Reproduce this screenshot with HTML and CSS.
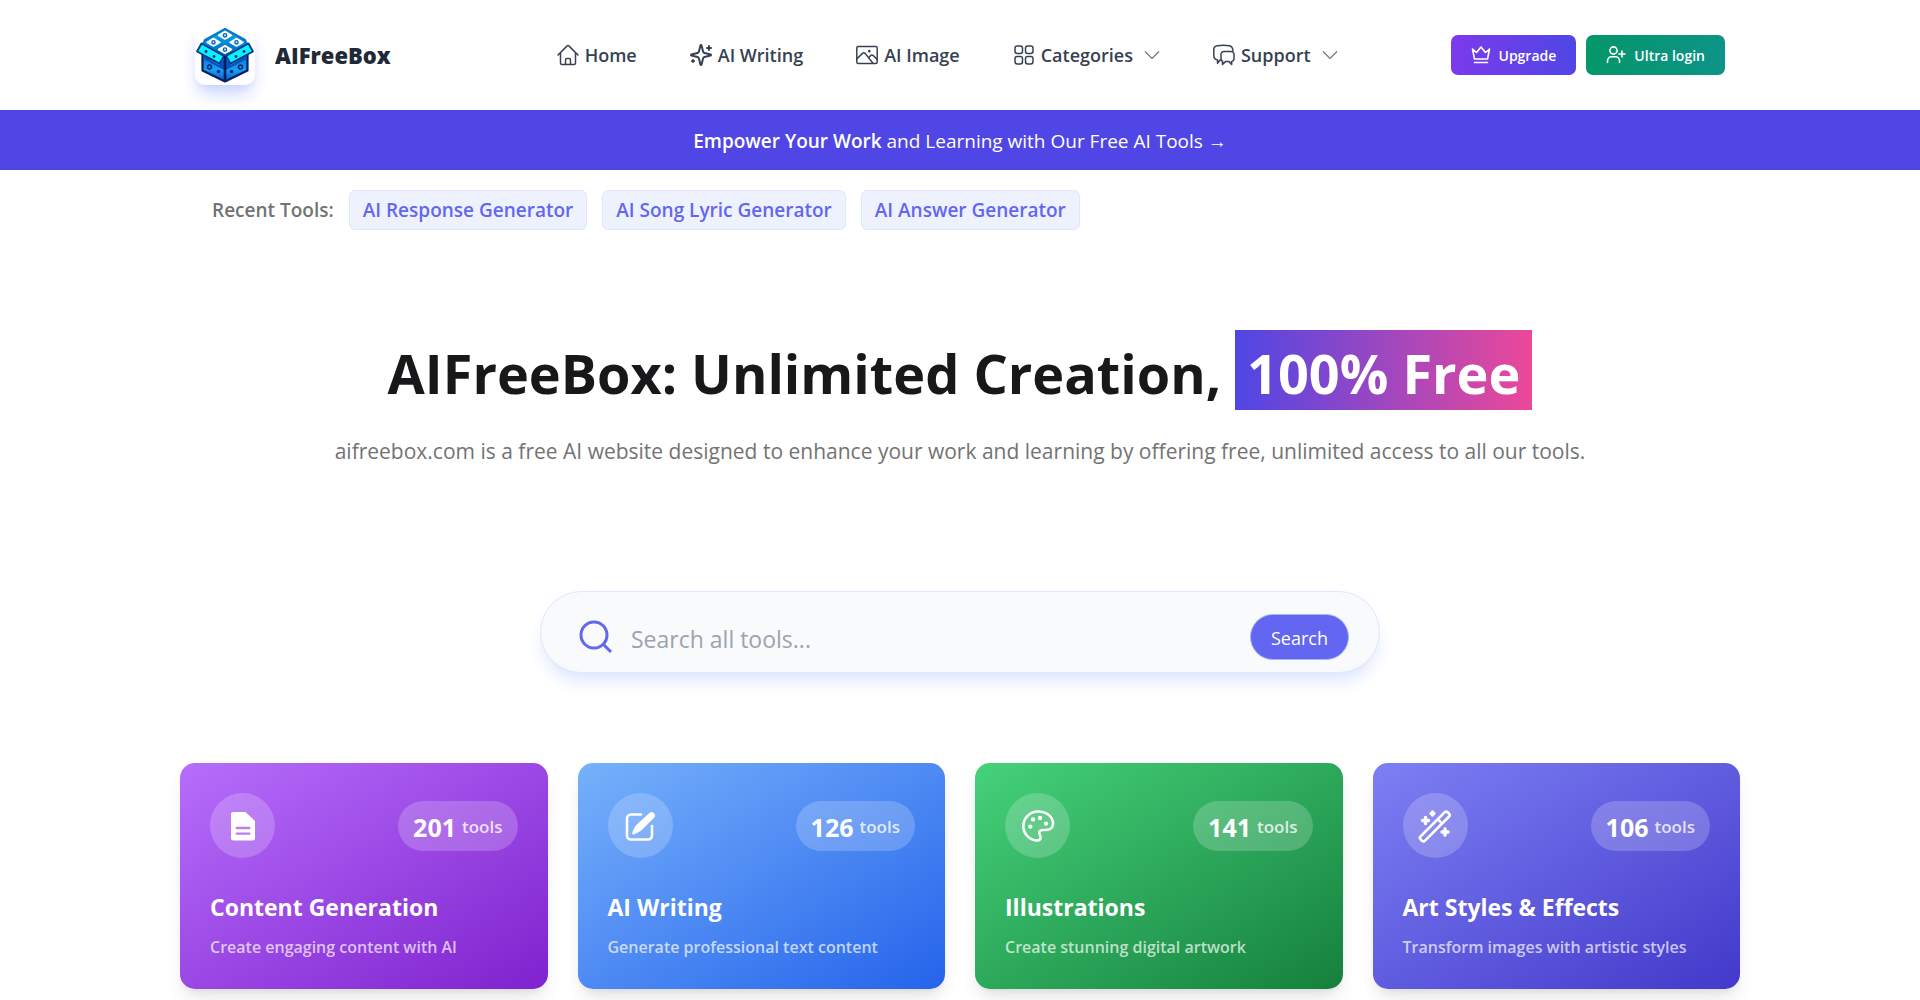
FILE: index.html
```html
<!DOCTYPE html>
<html lang="en">
<head>
<meta charset="utf-8">
<meta name="viewport" content="width=device-width, initial-scale=1">
<title>AIFreeBox</title>
<link rel="stylesheet" href="styles.css">
</head>
<body>
<header class="header container">
  <a class="brand" href="#">
    <span class="brand-logo">
      <svg viewBox="0 0 60 60" width="60" height="60" aria-hidden="true">
        <defs>
          <linearGradient id="lid" x1="0" y1="0" x2="0" y2="1"><stop offset="0" stop-color="#05b8ee"/><stop offset="1" stop-color="#0655b8"/></linearGradient>
          <linearGradient id="side" x1="0" y1="0" x2="0" y2="1"><stop offset="0" stop-color="#0568d0"/><stop offset="0.6" stop-color="#18a0f6"/><stop offset="1" stop-color="#0b55c0"/></linearGradient>
          <linearGradient id="tile" x1="0" y1="0" x2="0" y2="1"><stop offset="0.4" stop-color="#fff"/><stop offset="1" stop-color="#3beeff"/></linearGradient>
        </defs>
        <path d="M7.500 27v18.500L30 56.500l22.500-11V27L30 33z" fill="url(#side)" stroke="#041e63" stroke-width="2.200" stroke-linejoin="round"/>
        <path d="M8 30 24 40l5-6v11L8 34zM52 30 36 40l-5-6v11l21-11z" fill="#0553b8"/>
        <path d="M30 4 10 15 5 25l25 8 25-8-5-10z" fill="url(#lid)" stroke="#0578cc" stroke-width="2" stroke-linejoin="round"/>
        <g fill="url(#tile)" stroke="#fff" stroke-width="1.500" stroke-linejoin="round">
          <path d="m30 6.500 6.500 3.800-6.500 3.800-6.500-3.800z"/><path d="m18.500 13.500 6.500 3.800-6.500 3.800-6.500-3.800z"/><path d="m41.500 13.500 6.500 3.800-6.500 3.800-6.500-3.800z"/><path d="m30 20.700 6.500 3.800-6.500 3.800-6.500-3.800z"/>
        </g>
        <path d="M6.500 18.500 29 31 24.500 38.500 2 26.500zM53.500 18.500 31 31l4.500 7.500L58 26.500z" fill="#08f3ff" stroke="#05388f" stroke-width="1.800" stroke-linejoin="round"/>
        <path d="M30 31v25.500" stroke="#041e63" stroke-width="2.600"/>
        <g fill="none" stroke="#0758b5" stroke-width="1.300"><circle cx="30" cy="10.300" r="1.600"/><circle cx="18.500" cy="17.300" r="1.600"/><circle cx="41.500" cy="17.300" r="1.600"/><circle cx="30" cy="24.500" r="1.600"/></g>
        <g fill="none" stroke="#042873" stroke-width="1.600"><circle cx="14.500" cy="42" r="2"/><circle cx="45.500" cy="42" r="2"/></g>
        <g fill="#042873"><circle cx="11" cy="26.500" r="1.400"/><circle cx="19" cy="31.500" r="1.400"/><circle cx="41" cy="31.500" r="1.400"/><circle cx="49" cy="26.500" r="1.400"/><circle cx="23.500" cy="46.500" r="1.800"/><circle cx="36.500" cy="46.500" r="1.800"/></g>
      </svg>
    </span>
    <span class="brand-name">AIFreeBox</span>
  </a>
  <nav class="nav" aria-label="Main">
    <a class="nav-link" href="#">
      <svg class="icon" viewBox="0 0 24 24" aria-hidden="true"><path d="m2 12 9.200-9.100a1.200 1.200 0 0 1 1.600 0L22 12M4.500 9.800V20a1.500 1.500 0 0 0 1.500 1.500h12a1.500 1.500 0 0 0 1.500-1.500V9.800M9.500 21.500V17a1.500 1.500 0 0 1 1.500-1.500h2a1.500 1.500 0 0 1 1.500 1.500v4.500"/></svg>
      Home</a>
    <a class="nav-link" href="#">
      <svg class="icon icon-bold" viewBox="0 0 24 24" aria-hidden="true"><path d="M9.937 15.500A2 2 0 0 0 8.500 14.063l-6.135-1.582a.5.5 0 0 1 0-.962L8.500 9.936A2 2 0 0 0 9.937 8.500l1.582-6.135a.5.5 0 0 1 .963 0L14.063 8.500A2 2 0 0 0 15.500 9.937l6.135 1.581a.5.5 0 0 1 0 .964L15.500 14.063a2 2 0 0 0-1.437 1.437l-1.582 6.135a.5.5 0 0 1-.963 0zM20 3v4M22 5h-4M4 17v2M5 18H3"/></svg>
      AI Writing</a>
    <a class="nav-link" href="#">
      <svg class="icon" viewBox="0 0 24 24" aria-hidden="true"><rect x="1.800" y="3.500" width="20.400" height="17" rx="1.500"/><path d="m2 15.800 5.200-5.200a2.200 2.200 0 0 1 3.100 0l7.700 9.700M14 14.200l1.400-1.400a2.200 2.200 0 0 1 3.100 0l3.500 3.500"/><circle cx="14.300" cy="8.200" r=".6"/></svg>
      AI Image</a>
    <button class="nav-link" type="button">
      <svg class="icon" viewBox="0 0 24 24" aria-hidden="true"><rect x="3" y="3" width="7.500" height="7.500" rx="2.200"/><rect x="13.500" y="3" width="7.500" height="7.500" rx="2.200"/><rect x="3" y="13.500" width="7.500" height="7.500" rx="2.200"/><rect x="13.500" y="13.500" width="7.500" height="7.500" rx="2.200"/></svg>
      Categories
      <svg class="chevron" viewBox="0 0 16 16" aria-hidden="true"><path d="m1 4.500 7 7 7-7"/></svg>
    </button>
    <button class="nav-link" type="button">
      <svg class="icon" viewBox="0 0 24 24" aria-hidden="true"><path d="M8.500 17H8l-2.500 3.300V16.900C3 16.500 1.800 15 1.800 12.800V6.600C1.800 4.300 3.100 3 5.400 2.700c4-.5 8-.5 12 0 2 .3 3.300 1.700 3.500 4.800M12 8.500h7.200a2.800 2.800 0 0 1 2.800 2.800v4.300a2.800 2.800 0 0 1-2.300 2.800v3l-3-3h-3l-3.200 3v-3.100a2.500 2.500 0 0 1-1.500-2.500v-4.500a2.800 2.800 0 0 1 3-2.800z"/></svg>
      Support
      <svg class="chevron" viewBox="0 0 16 16" aria-hidden="true"><path d="m1 4.500 7 7 7-7"/></svg>
    </button>
  </nav>
  <div class="actions">
    <button class="action action-upgrade" type="button">
      <svg class="action-icon" viewBox="0 0 20 20" aria-hidden="true"><path d="m1.500 4 4 3.500L10 2l4.500 5.500 4-3.500-2 10h-13zM3.500 17.500h13"/></svg>
      Upgrade</button>
    <button class="action action-login" type="button">
      <svg class="action-icon" viewBox="0 0 20 20" aria-hidden="true"><circle cx="7.500" cy="5.500" r="3.600"/><path d="M1.500 17.500v-1.700a4 4 0 0 1 4-4h4a4 4 0 0 1 4 4v1.700M16 6v6M13 9h6"/></svg>
      Ultra login</button>
  </div>
</header>

<a class="banner" href="#"><span><strong>Empower Your Work</strong> and Learning with Our Free AI Tools →</span></a>

<main>
  <section class="recent container" aria-label="Recent tools">
    <span class="recent-label">Recent Tools:</span>
    <a class="chip" href="#">AI Response Generator</a>
    <a class="chip" href="#">AI Song Lyric Generator</a>
    <a class="chip" href="#">AI Answer Generator</a>
  </section>

  <section class="hero container">
    <h1 class="hero-title">AIFreeBox: Unlimited Creation, <span class="hero-mark">100% Free</span></h1>
    <p class="hero-text">aifreebox.com is a free AI website designed to enhance your work and learning by offering free, unlimited access to all our tools.</p>
  </section>

  <form class="search" role="search">
    <label class="search-label" for="tool-search" aria-label="Search all tools">
      <svg class="search-icon" viewBox="0 0 34 34" aria-hidden="true"><circle cx="15" cy="15" r="13"/><path d="m24.500 24.500 7.500 7.500"/></svg>
    </label>
    <input class="search-input" id="tool-search" type="text" placeholder="Search all tools...">
    <button class="search-button" type="submit">Search</button>
  </form>

  <section class="cards container" aria-label="Tool categories">
    <a class="card card-purple" href="#">
      <span class="card-top">
        <span class="card-icon"><svg viewBox="0 0 32 32" aria-hidden="true"><path fill="#fff" fill-rule="evenodd" d="M6 2h12.500L28 11v17a2.500 2.500 0 0 1-2.500 2.500h-19A2.500 2.500 0 0 1 4 28V4a2 2 0 0 1 2-2zm3.700 14.800a1.200 1.200 0 0 0 0 2.400h12.600a1.200 1.200 0 0 0 0-2.400zm0 5.600a1.200 1.200 0 0 0 0 2.400h12.600a1.200 1.200 0 0 0 0-2.400z"/></svg></span>
        <span class="count"><strong>201</strong> tools</span>
      </span>
      <span class="card-title">Content Generation</span>
      <span class="card-text">Create engaging content with AI</span>
    </a>
    <a class="card card-blue" href="#">
      <span class="card-top">
        <span class="card-icon"><svg viewBox="0 0 32 32" aria-hidden="true"><path class="stroke" d="M17 4.500H7A4 4 0 0 0 3 8.500v17a4 4 0 0 0 4 4h17a4 4 0 0 0 4-4V16"/><path fill="#fff" d="M25.200 3.200a3.300 3.300 0 0 1 4.700 4.700L18.500 19.300c-2.600 2.600-5.500 4-9.300 5.100-.7.200-1.200-.4-1-1.100 1.100-3.800 2.600-6.700 5.100-9.200z"/></svg></span>
        <span class="count"><strong>126</strong> tools</span>
      </span>
      <span class="card-title">AI Writing</span>
      <span class="card-text">Generate professional text content</span>
    </a>
    <a class="card card-green" href="#">
      <span class="card-top">
        <span class="card-icon"><svg viewBox="0 0 32 32" aria-hidden="true"><path class="stroke" d="M16 1.500C7.500 1.500 1.300 8.200 1.300 16S7.500 30.500 15.500 30.500c2.200 0 3.300-1.700 3-3.500-.3-2-1.800-3-1.200-5 .5-1.500 1.900-2 3.700-2h3c4 0 7-2.200 7-6.500C31 6.200 24 1.500 16 1.500z"/><circle cx="8.300" cy="16.600" r="2.200" fill="#fff"/><circle cx="11" cy="9.400" r="2.200" fill="#fff"/><circle cx="18" cy="8" r="2.200" fill="#fff"/><circle cx="24" cy="13.600" r="2.200" fill="#fff"/></svg></span>
        <span class="count"><strong>141</strong> tools</span>
      </span>
      <span class="card-title">Illustrations</span>
      <span class="card-text">Create stunning digital artwork</span>
    </a>
    <a class="card card-indigo" href="#">
      <span class="card-top">
        <span class="card-icon"><svg viewBox="0 0 32 32" aria-hidden="true"><path class="stroke" d="M1.500 26.500 25.800 2.200a2 2 0 0 1 2.800 0l1.500 1.500a2 2 0 0 1 0 2.800L5.800 30.800a2 2 0 0 1-2.800 0l-1.500-1.500a2 2 0 0 1 0-2.800zM18.800 9.200l4.300 4.300"/><path class="stroke stroke-bold" d="M6.500 7.500v6M3.500 10.500h6M13.500 2v3M12 3.500h3M26 19v6M23 22h6"/></svg></span>
        <span class="count"><strong>106</strong> tools</span>
      </span>
      <span class="card-title">Art Styles &amp; Effects</span>
      <span class="card-text">Transform images with artistic styles</span>
    </a>
  </section>
</main>
</body>
</html>
```
FILE: styles.css
```css
* {
  box-sizing: border-box;
}

body {
  margin: 0;
  background: #fff;
  color: #18181b;
  font-family: "Open Sans", "Noto Sans", sans-serif;
  font-size: 18px;
}

a {
  color: inherit;
  text-decoration: none;
}

button,
input {
  font-family: inherit;
}

button {
  border: 0;
  cursor: pointer;
}

svg {
  display: block;
  flex: none;
}

.container {
  width: 100%;
  max-width: 1560px;
  margin: 0 auto;
}

/* Header */
.header {
  display: flex;
  align-items: center;
  justify-content: space-between;
  min-height: 110px;
  padding: 0 15px;
}

.brand {
  display: flex;
  align-items: center;
  gap: 20px;
}

.brand-logo {
  border-radius: 10px;
  background: #fff;
  box-shadow: 0 12px 18px -4px #c7d2fe, 0 5px 8px -5px #c7d2fe;
}

.brand-name {
  color: #1f2937;
  font-size: 22px;
  font-weight: 800;
}

.nav {
  display: flex;
  align-items: center;
  gap: 52px;
  margin-left: 52px;
}

.nav-link {
  display: flex;
  align-items: center;
  gap: 5px;
  padding: 0;
  background: none;
  color: #374151;
  font-size: 18px;
  font-weight: 600;
}

.icon {
  width: 24px;
  height: 24px;
  fill: none;
  stroke: #374151;
  stroke-width: 1.5;
  stroke-linecap: round;
  stroke-linejoin: round;
}

.icon-bold {
  stroke-width: 2;
}

.chevron {
  width: 16px;
  height: 16px;
  margin-left: 6px;
  fill: none;
  stroke: #6b7280;
  stroke-width: 1.2;
}

.actions {
  display: flex;
  gap: 10px;
}

.action {
  display: flex;
  align-items: center;
  gap: 8px;
  height: 40px;
  padding: 0 20px;
  border-radius: 7px;
  color: #fff;
  font-size: 14px;
  font-weight: 600;
}

.action-upgrade {
  background: linear-gradient(to right, #7c3aed, #4f46e5);
}

.action-login {
  background: linear-gradient(to right, #059669, #0d9488);
}

.action-icon {
  width: 20px;
  height: 20px;
  fill: none;
  stroke: #fff;
  stroke-width: 1.6;
  stroke-linecap: round;
  stroke-linejoin: round;
}

/* Banner */
.banner {
  display: flex;
  align-items: center;
  justify-content: center;
  min-height: 60px;
  padding-top: 2px;
  background: #4f46e5;
  color: #fff;
  font-size: 19px;
}

.banner strong {
  font-weight: 600;
}

/* Recent tools */
.recent {
  display: flex;
  flex-wrap: wrap;
  align-items: center;
  gap: 15px;
  padding: 20px 32px;
}

.recent-label {
  color: #737373;
  font-size: 19px;
  font-weight: 600;
}

.chip {
  padding: 0 13px;
  border: 1px solid #e0e7ff;
  border-radius: 6px;
  background: #eef2ff;
  color: #6366f1;
  font-size: 19px;
  font-weight: 600;
  line-height: 38px;
}

/* Hero */
.hero {
  padding: 80px 0 121px;
  text-align: center;
}

.hero-title {
  margin: 0;
  font-size: 54px;
  font-weight: 700;
  line-height: 74px;
}

.hero-mark {
  display: inline-block;
  padding: 6px 12px 0;
  background: linear-gradient(to right, #4f46e5, #ec4899);
  color: #fff;
}

.hero-text {
  margin: 22px 0 0;
  color: #737373;
  font-size: 21px;
  line-height: 38px;
}

/* Search */
.search {
  display: flex;
  align-items: center;
  width: 100%;
  max-width: 840px;
  min-height: 82px;
  margin: 0 auto 90px;
  padding: 10px 30px 0 38px;
  border: 1px solid #e0e7ff;
  border-radius: 41px;
  background: #f9fafb;
  box-shadow: 0 12px 18px -4px #e0e7ff, 0 5px 8px -5px #e0e7ff;
}

.search-icon {
  width: 34px;
  height: 34px;
  fill: none;
  stroke: #6366f1;
  stroke-width: 3;
}

.search-input {
  flex: 1;
  min-width: 0;
  padding: 4px 0 0 18px;
  border: 0;
  outline: 0;
  background: transparent;
  color: #374151;
  font-size: 23px;
}

.search-input::placeholder {
  color: #9ca3af;
}

.search-button {
  height: 46px;
  padding: 2px 20px 0;
  border: 1px solid #a5b4fc;
  border-radius: 23px;
  background: #6366f1;
  color: #fff;
  font-size: 18px;
}

/* Category cards */
.cards {
  display: grid;
  grid-template-columns: repeat(4, 1fr);
  gap: 30px;
  padding-bottom: 13px;
}

.card {
  display: flex;
  flex-direction: column;
  min-height: 225px;
  padding: 30px;
  border-radius: 15px;
  box-shadow: 0 12px 18px -4px #0000001a, 0 5px 8px -5px #0000001a;
  color: #fff;
}

.card-purple {
  background: linear-gradient(to bottom right, #b76efb, #7e22ce);
}

.card-blue {
  background: linear-gradient(to bottom right, #76b1fb, #2563eb);
}

.card-green {
  background: linear-gradient(to bottom right, #45d27a, #15803d);
}

.card-indigo {
  background: linear-gradient(to bottom right, #7d80f4, #4338ca);
}

.card-top {
  display: flex;
  align-items: center;
  justify-content: space-between;
  margin-bottom: 30px;
}

.card-icon {
  display: grid;
  place-items: center;
  width: 65px;
  height: 65px;
  border-radius: 50%;
  background: #ffffff33;
}

.card-icon svg {
  width: 32px;
  height: 32px;
  overflow: visible;
}

.stroke {
  fill: none;
  stroke: #fff;
  stroke-width: 2.6;
  stroke-linecap: round;
  stroke-linejoin: round;
}

.stroke-bold {
  stroke-width: 3.4;
}

.count {
  display: flex;
  align-items: center;
  gap: 6px;
  height: 50px;
  padding: 2px 15px 0;
  border-radius: 25px;
  background: #ffffff33;
  color: #ffffffcc;
  font-size: 17px;
  font-weight: 600;
}

.count strong {
  color: #fff;
  font-size: 25px;
  font-weight: 700;
}

.card-title {
  margin-bottom: 9px;
  font-size: 23px;
  font-weight: 700;
  line-height: 38px;
}

.card-text {
  color: #ffffffb3;
  font-size: 16px;
  font-weight: 600;
  line-height: 24px;
}
```
